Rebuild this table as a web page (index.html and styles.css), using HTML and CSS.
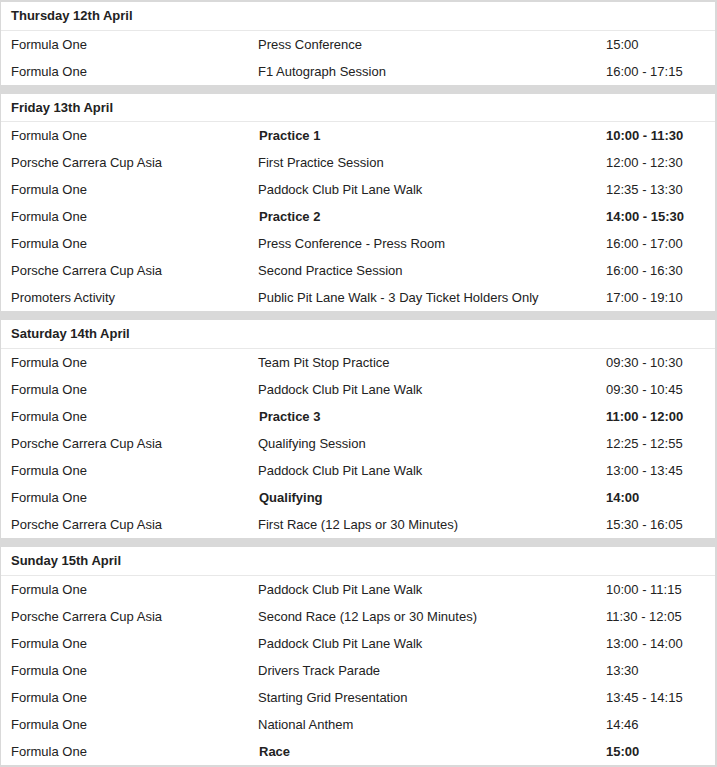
FILE: index.html
```html
<!DOCTYPE html>
<html>
<head>
<meta charset="utf-8">
<link rel="stylesheet" href="styles.css">
</head>
<body>
<div class="schedule">
  <section class="day">
    <div class="day-title">Thursday 12th April</div>
    <div class="row"><span>Formula One</span><span>Press Conference</span><span>15:00</span></div>
    <div class="row"><span>Formula One</span><span>F1 Autograph Session</span><span>16:00 - 17:15</span></div>
  </section>
  <section class="day">
    <div class="day-title">Friday 13th April</div>
    <div class="row key"><span>Formula One</span><span>Practice 1</span><span>10:00 - 11:30</span></div>
    <div class="row"><span>Porsche Carrera Cup Asia</span><span>First Practice Session</span><span>12:00 - 12:30</span></div>
    <div class="row"><span>Formula One</span><span>Paddock Club Pit Lane Walk</span><span>12:35 - 13:30</span></div>
    <div class="row key"><span>Formula One</span><span>Practice 2</span><span>14:00 - 15:30</span></div>
    <div class="row"><span>Formula One</span><span>Press Conference - Press Room</span><span>16:00 - 17:00</span></div>
    <div class="row"><span>Porsche Carrera Cup Asia</span><span>Second Practice Session</span><span>16:00 - 16:30</span></div>
    <div class="row"><span>Promoters Activity</span><span>Public Pit Lane Walk - 3 Day Ticket Holders Only</span><span>17:00 - 19:10</span></div>
  </section>
  <section class="day">
    <div class="day-title">Saturday 14th April</div>
    <div class="row"><span>Formula One</span><span>Team Pit Stop Practice</span><span>09:30 - 10:30</span></div>
    <div class="row"><span>Formula One</span><span>Paddock Club Pit Lane Walk</span><span>09:30 - 10:45</span></div>
    <div class="row key"><span>Formula One</span><span>Practice 3</span><span>11:00 - 12:00</span></div>
    <div class="row"><span>Porsche Carrera Cup Asia</span><span>Qualifying Session</span><span>12:25 - 12:55</span></div>
    <div class="row"><span>Formula One</span><span>Paddock Club Pit Lane Walk</span><span>13:00 - 13:45</span></div>
    <div class="row key"><span>Formula One</span><span>Qualifying</span><span>14:00</span></div>
    <div class="row"><span>Porsche Carrera Cup Asia</span><span>First Race (12 Laps or 30 Minutes)</span><span>15:30 - 16:05</span></div>
  </section>
  <section class="day">
    <div class="day-title">Sunday 15th April</div>
    <div class="row"><span>Formula One</span><span>Paddock Club Pit Lane Walk</span><span>10:00 - 11:15</span></div>
    <div class="row"><span>Porsche Carrera Cup Asia</span><span>Second Race (12 Laps or 30 Minutes)</span><span>11:30 - 12:05</span></div>
    <div class="row"><span>Formula One</span><span>Paddock Club Pit Lane Walk</span><span>13:00 - 14:00</span></div>
    <div class="row"><span>Formula One</span><span>Drivers Track Parade</span><span>13:30</span></div>
    <div class="row"><span>Formula One</span><span>Starting Grid Presentation</span><span>13:45 - 14:15</span></div>
    <div class="row"><span>Formula One</span><span>National Anthem</span><span>14:46</span></div>
    <div class="row key"><span>Formula One</span><span>Race</span><span>15:00</span></div>
  </section>
</div>
</body>
</html>
```
FILE: styles.css
```css
html, body {
  margin: 0;
  padding: 0;
  background: #ffffff;
}

.schedule {
  width: 717px;
  height: 767px;
  box-sizing: border-box;
  border-style: solid;
  border-color: #d9d9d9;
  border-width: 2px 2px 2px 1px;
  background: #d9d9d9;
  display: flex;
  flex-direction: column;
  gap: 9px;
  font-family: "Liberation Sans", Arial, sans-serif;
  font-size: 13px;
  color: #222222;
}

.day {
  background: #ffffff;
  display: flex;
  flex-direction: column;
}

.day:last-child {
  flex: 1;
}

.day-title {
  height: 27.5px;
  line-height: 28px;
  padding-left: 10px;
  font-weight: bold;
  border-bottom: 1px solid #e8e8e8;
}

.row {
  display: grid;
  grid-template-columns: 247px 348px 1fr;
  height: 27.05px;
  align-items: center;
  line-height: 16px;
}

.row span {
  padding-left: 10px;
  padding-top: 1px;
  white-space: nowrap;
}

.row.key span:nth-child(2),
.row.key span:nth-child(3) {
  font-weight: bold;
}

.row.key span:nth-child(2) {
  padding-left: 11px;
}
```
